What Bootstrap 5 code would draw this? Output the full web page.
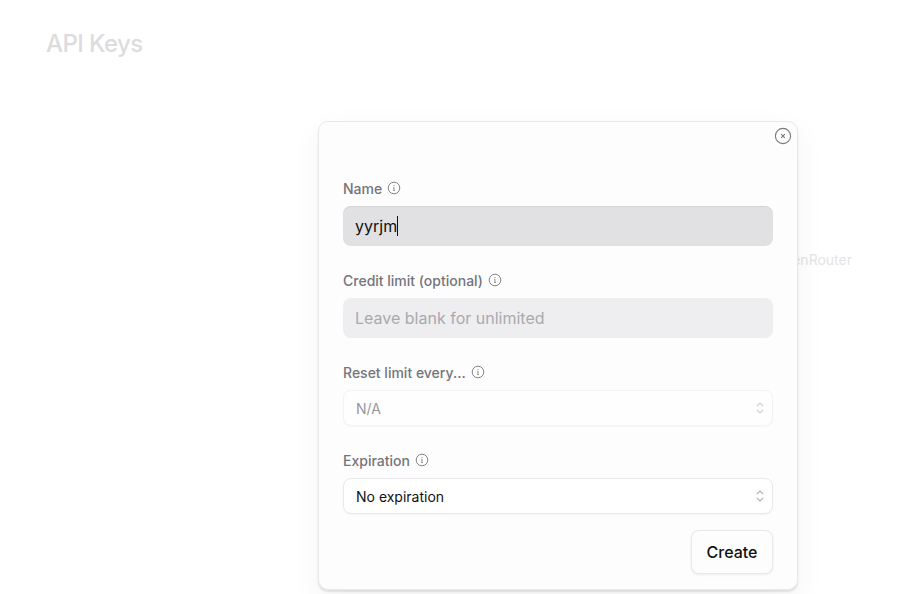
<!DOCTYPE html>
<html lang="en">
<head>
<meta charset="utf-8">
<title>API Keys</title>
<link href="https://cdn.jsdelivr.net/npm/bootstrap@5.3.0/dist/css/bootstrap.min.css" rel="stylesheet">
<style>
html, body { height: 100%; }
body { font-family: Inter, "Liberation Sans", sans-serif; background: #fff; overflow: hidden; position: relative; }
.page-head { padding: 30px 46px 0; }
.page-title { font-size: 24px; line-height: 28px; font-weight: 500; color: #dcdcde; margin: 0; letter-spacing: -.6px; }
.behind-line { margin-top: 192px; padding-right: 60px; font-size: 14px; line-height: 20px; color: #e4e4e6; }
.dialog-card { position: absolute; left: 318px; top: 121px; width: 480px; height: 469px; background: #fdfdfd; border: 1px solid #e9e9eb; border-radius: 10px; box-shadow: 0 2px 2px rgba(0,0,0,.1), 0 10px 30px rgba(0,0,0,.05); padding: 56.5px 24px 16px; }
.dialog-close { position: absolute; top: 5px; right: 5px; width: 18px; height: 18px; padding: 0; border: 0; background: none; display: flex; color: #77777c; }
.field-stack { gap: 24.5px; }
.field-label { font-size: 14px; line-height: 19.5px; font-weight: 500; color: #74747c; margin-bottom: 8px; gap: 5px; }
.hint-icon { width: 14px; height: 14px; color: #77777d; flex: none; }
.field-wrap { position: relative; }
.text-box.form-control { height: 40px; border: 0; border-radius: 8px; padding: 0 12px; font-size: 16px; color: #111; background: #eeeef0; }
.text-box.form-control::placeholder { color: #a9a9ae; opacity: 1; }
.text-box.is-filled { background: #e1e1e3; box-shadow: inset 0 1px 1px rgba(0,0,0,.06); }
.fake-caret { position: absolute; left: 54px; top: 10px; width: 1px; height: 20px; background: #111; }
.pick-box.form-select { height: 36px; border: 1px solid #e9e9eb; border-radius: 8px; padding: 0 30px 0 12px; font-size: 14px; color: #111; background-color: #fff; box-shadow: 0 1px 2px rgba(0,0,0,.04); background-size: 10px 16px; background-position: right 7px center;
  background-image: url("data:image/svg+xml,%3Csvg xmlns='http://www.w3.org/2000/svg' viewBox='0 0 10 16'%3E%3Cpath d='M2 6l3-3 3 3M2 10l3 3 3-3' fill='none' stroke='%23b5b5b9' stroke-width='1.2'/%3E%3C/svg%3E"); }
.pick-box.form-select:disabled { color: #97979c; background-color: #fefefe; border-color: #f3f3f4; box-shadow: 0 1px 2px rgba(0,0,0,.025);
  background-image: url("data:image/svg+xml,%3Csvg xmlns='http://www.w3.org/2000/svg' viewBox='0 0 10 16'%3E%3Cpath d='M2 6l3-3 3 3M2 10l3 3 3-3' fill='none' stroke='%23d2d2d5' stroke-width='1.2'/%3E%3C/svg%3E"); }
.submit-row { margin-top: 16px; }
.create-btn.btn { width: 82px; height: 44px; padding: 0; font-size: 16px; font-weight: 500; color: #111; background: #fdfdfd; border: 1px solid #e9e9eb; border-radius: 8px; box-shadow: 0 1px 3px rgba(0,0,0,.07); }
</style>
</head>
<body>
<main>
  <div class="page-head"><h1 class="page-title">API Keys</h1></div>
  <div class="behind-line d-flex justify-content-end">OpenRouter</div>
</main>

<div class="dialog-card" role="dialog" aria-modal="true">
  <button class="dialog-close" type="button" aria-label="Close">
    <svg viewBox="0 0 18 18" width="18" height="18" fill="none" stroke="currentColor"><circle cx="9" cy="9" r="7.6" stroke-width="1.1"/><path d="M7.2 7.2l3.6 3.6M10.8 7.2l-3.6 3.6" stroke-width="1.1"/></svg>
  </button>
  <form>
    <div class="d-flex flex-column field-stack">
      <div>
        <label class="field-label d-flex align-items-center" for="keyName">Name
          <svg class="hint-icon" viewBox="0 0 14 14" fill="none" stroke="currentColor"><circle cx="7" cy="7" r="5.8" stroke-width=".9"/><path d="M6.2 6.4H7v3M6.1 9.4h1.8" stroke-width=".8"/><circle cx="7" cy="4.5" r=".55" fill="currentColor" stroke="none"/></svg>
        </label>
        <div class="field-wrap">
          <input id="keyName" class="form-control text-box is-filled" type="text" value="yyrjm">
          <span class="fake-caret"></span>
        </div>
      </div>
      <div>
        <label class="field-label d-flex align-items-center" for="creditLimit">Credit limit (optional)
          <svg class="hint-icon" viewBox="0 0 14 14" fill="none" stroke="currentColor"><circle cx="7" cy="7" r="5.8" stroke-width=".9"/><path d="M6.2 6.4H7v3M6.1 9.4h1.8" stroke-width=".8"/><circle cx="7" cy="4.5" r=".55" fill="currentColor" stroke="none"/></svg>
        </label>
        <input id="creditLimit" class="form-control text-box" type="text" placeholder="Leave blank for unlimited">
      </div>
      <div>
        <label class="field-label d-flex align-items-center" for="resetLimit">Reset limit every...
          <svg class="hint-icon" viewBox="0 0 14 14" fill="none" stroke="currentColor"><circle cx="7" cy="7" r="5.8" stroke-width=".9"/><path d="M6.2 6.4H7v3M6.1 9.4h1.8" stroke-width=".8"/><circle cx="7" cy="4.5" r=".55" fill="currentColor" stroke="none"/></svg>
        </label>
        <select id="resetLimit" class="form-select pick-box" disabled><option>N/A</option></select>
      </div>
      <div>
        <label class="field-label d-flex align-items-center" for="expiration">Expiration
          <svg class="hint-icon" viewBox="0 0 14 14" fill="none" stroke="currentColor"><circle cx="7" cy="7" r="5.8" stroke-width=".9"/><path d="M6.2 6.4H7v3M6.1 9.4h1.8" stroke-width=".8"/><circle cx="7" cy="4.5" r=".55" fill="currentColor" stroke="none"/></svg>
        </label>
        <select id="expiration" class="form-select pick-box"><option>No expiration</option></select>
      </div>
    </div>
    <div class="submit-row d-flex justify-content-end">
      <button class="btn create-btn" type="button">Create</button>
    </div>
  </form>
</div>
<script src="https://cdn.jsdelivr.net/npm/bootstrap@5.3.0/dist/js/bootstrap.bundle.min.js"></script>
</body>
</html>
